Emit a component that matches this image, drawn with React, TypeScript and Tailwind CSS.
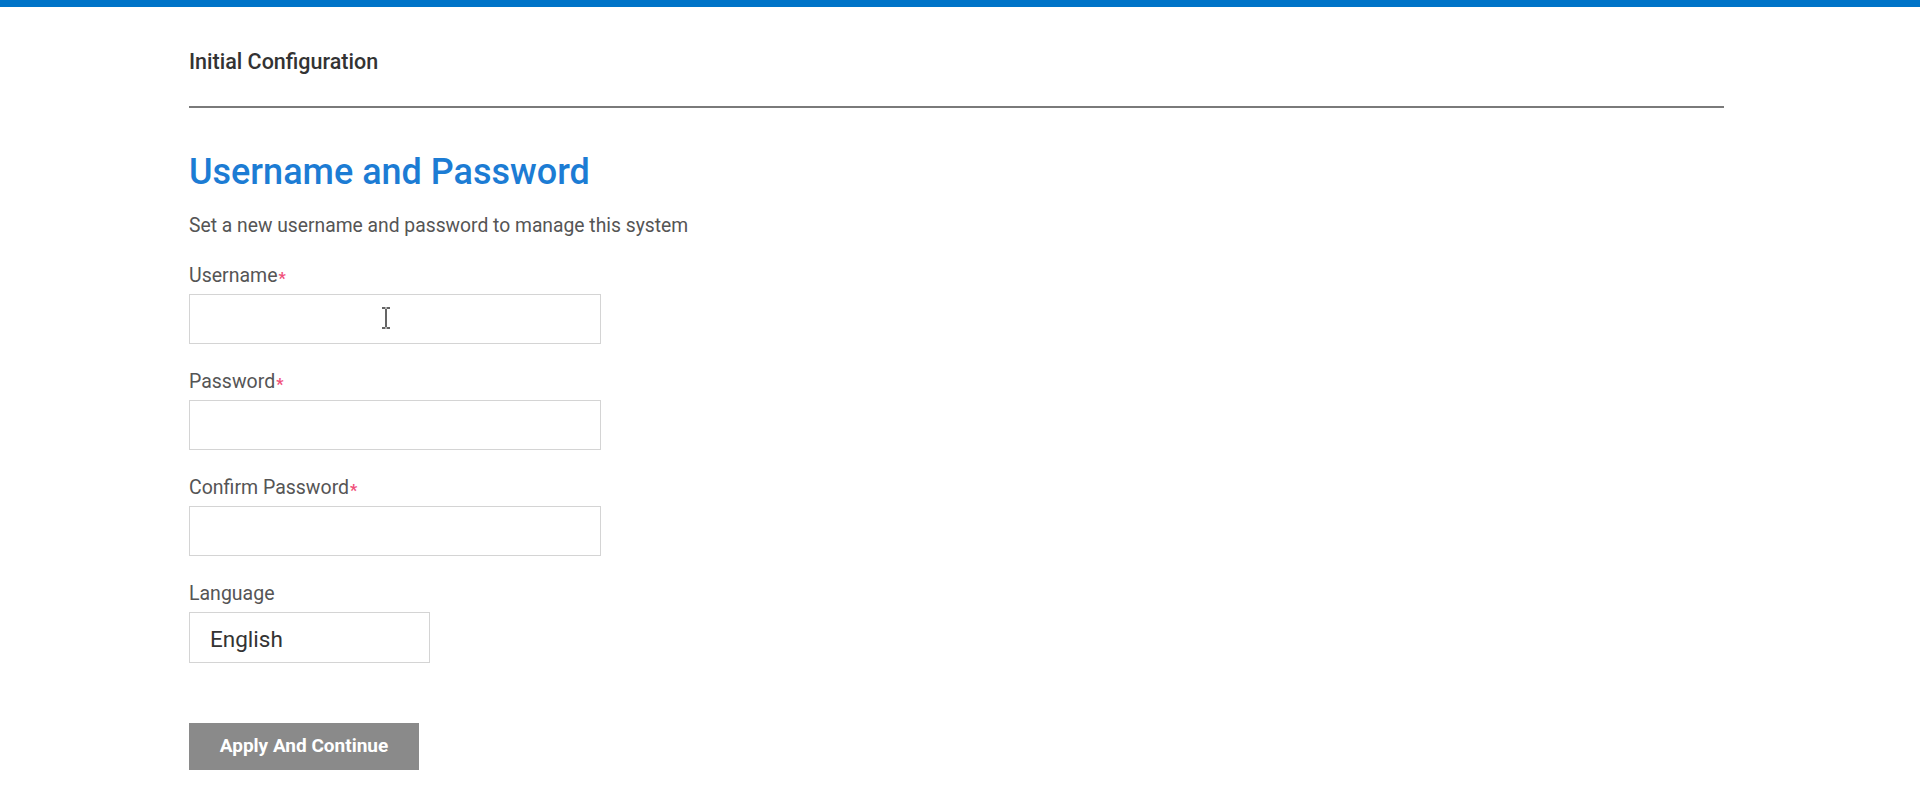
import React from 'react';

const Field: React.FC<{ label: string; required?: boolean; cursor?: boolean }> = ({ label, required, cursor }) => (
  <div className="mt-6">
    <label className="block h-6 text-[19.5px] leading-[28px] text-[#555]">
      {label}
      {required && <span className="ml-[1px] text-[16px] font-bold text-[#f0507a] align-[-2px]">*</span>}
    </label>
    <div className="relative mt-2 h-[50px] w-[412px] border border-[#d4d4d4] bg-white">
      {cursor && (
        <svg className="absolute left-[191px] top-[12px]" width="10" height="22" viewBox="0 0 10 22">
          <path d="M1 1h3.5M5.5 1H9M5 2v18M1 21h3.5M5.5 21H9" stroke="#333" strokeWidth="1.5" fill="none" />
        </svg>
      )}
    </div>
  </div>
);

const App: React.FC = () => {
  return (
    <div className="min-h-[800px] bg-white" style={{ fontFamily: 'Roboto, "Liberation Sans", sans-serif' }}>
      <div className="h-[7px] bg-[#0074c8]" />
      <div className="ml-[189px] w-[1535px]">
        <div className="pt-[43px] text-[21.5px] leading-6 font-medium text-[#333]">Initial Configuration</div>
        <div className="mt-[32px] h-[2px] bg-[#7a7a7a]" />

        <h1 className="mt-[42px] text-[36px] leading-[44px] font-medium text-[#1c7cd4]">Username and Password</h1>
        <p className="mt-5 text-[19.3px] leading-6 text-[#555]">Set a new username and password to manage this system</p>

        <Field label="Username" required cursor />
        <Field label="Password" required />
        <Field label="Confirm Password" required />

        <div className="mt-6">
          <label className="block h-6 text-[19.5px] leading-[28px] text-[#555]">Language</label>
          <div className="mt-[8px] flex h-[51px] w-[241px] items-center border border-[#d4d4d4] bg-white pl-5 pt-[5px] text-[22.5px] text-[#333]">
            English
          </div>
        </div>

        <button className="mt-[60px] h-[47px] w-[230px] bg-[#8a8a8a] text-[19px] font-bold text-white">
          Apply And Continue
        </button>
      </div>
    </div>
  );
};

export default App;
